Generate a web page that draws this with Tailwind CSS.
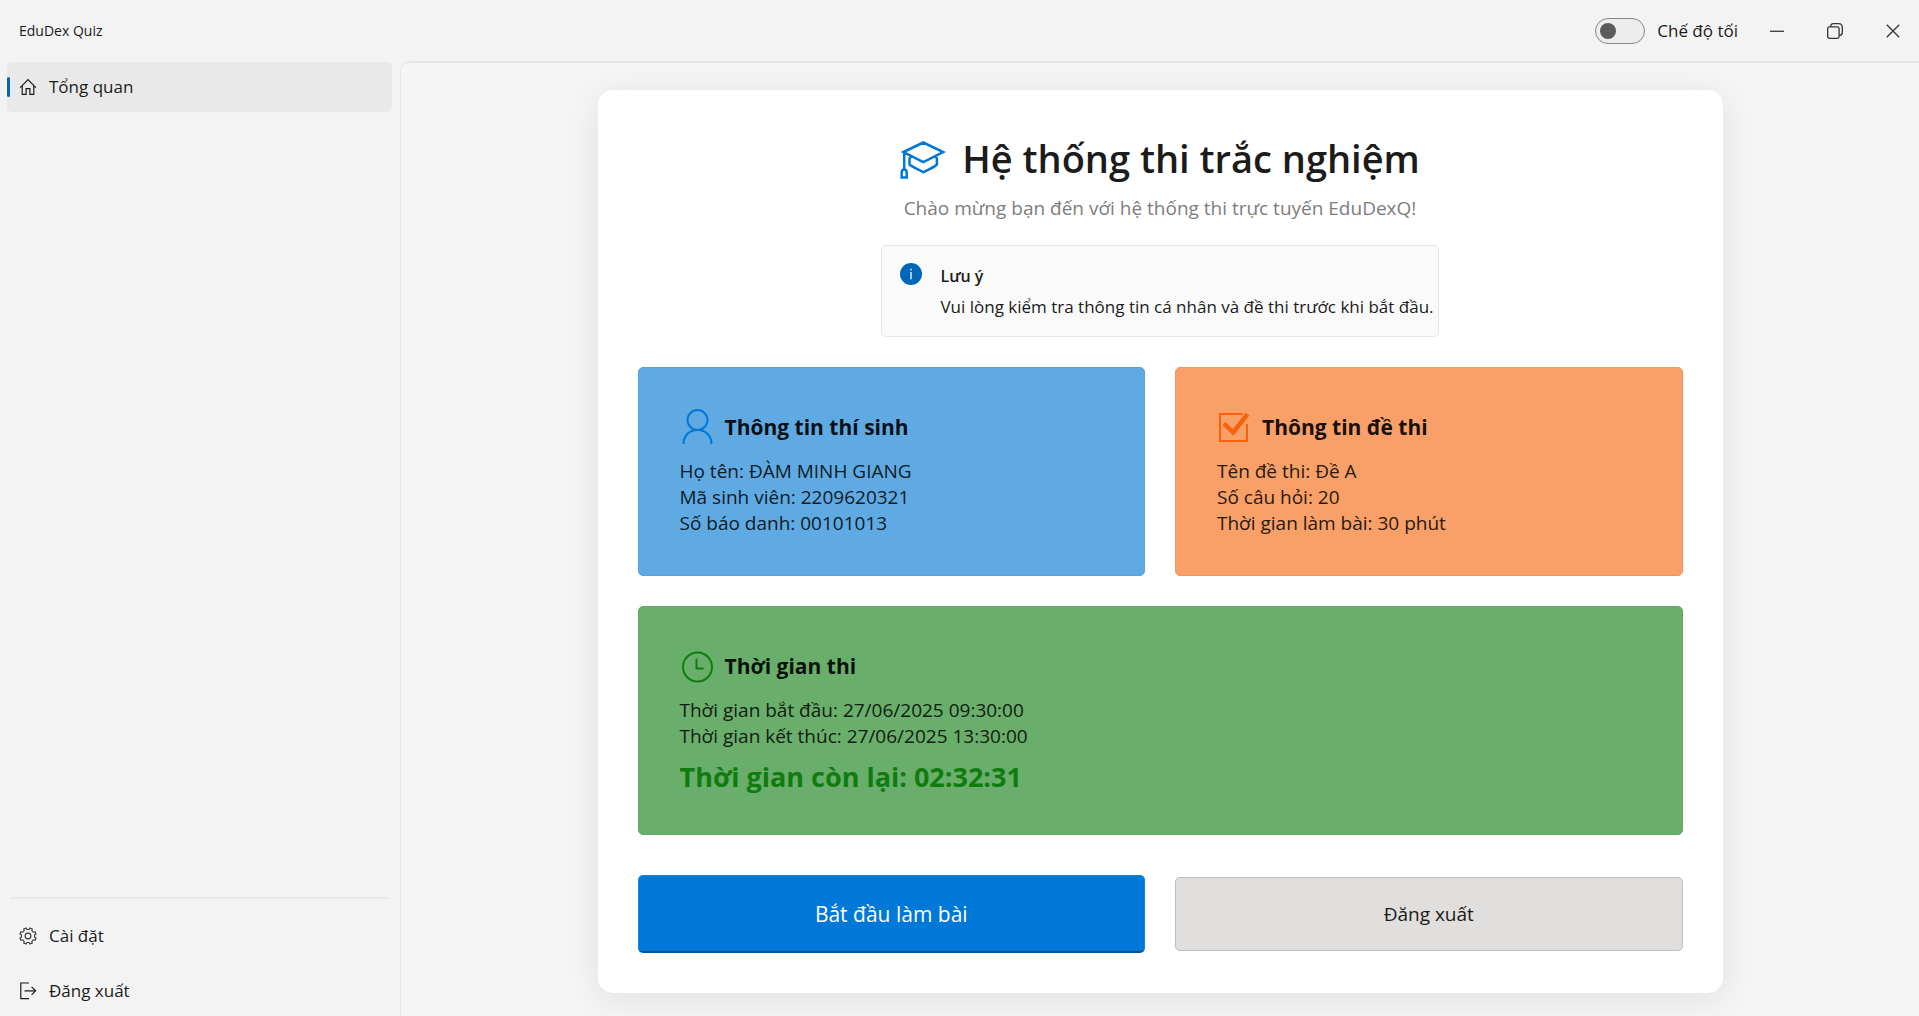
<!DOCTYPE html>
<html lang="vi">
<head>
<meta charset="utf-8">
<meta name="viewport" content="width=device-width, initial-scale=1">
<title>EduDex Quiz</title>
<script src="https://cdn.jsdelivr.net/npm/@tailwindcss/browser@4"></script>
</head>
<body class="bg-[#f3f3f3] font-['Open_Sans','Noto_Sans',sans-serif] text-[17px] leading-[26px] text-[#1b1b1b]">
<div class="flex h-screen flex-col overflow-hidden">
  <header class="flex h-[61px] shrink-0 items-center justify-between pl-[19px]">
    <span class="text-sm">EduDex Quiz</span>
    <div class="flex items-center">
      <label class="flex items-center gap-3">
        <span class="relative flex h-[26px] w-[50px]">
          <input type="checkbox" role="switch" class="peer h-full w-full appearance-none rounded-full border border-[#868686] bg-[#ededed]">
          <span class="pointer-events-none absolute top-[5px] left-[5px] h-4 w-4 rounded-full bg-[#5c5c5c] peer-checked:left-[29px]"></span>
        </span>
        <span>Chế độ tối</span>
      </label>
      <div class="-mr-[3px] ml-[10px] flex">
        <button aria-label="Thu nhỏ" class="flex h-[60px] w-[58px] items-center justify-center">
          <svg class="h-4 w-4" viewBox="0 0 16 16" fill="none" stroke="#444" stroke-width="1.4"><path d="M1 8.3h14"/></svg>
        </button>
        <button aria-label="Khôi phục" class="flex h-[60px] w-[58px] items-center justify-center">
          <svg class="h-4 w-4" viewBox="0 0 16 16" fill="none" stroke="#333" stroke-width="1.3"><rect x=".7" y="3.9" width="11.4" height="11.4" rx="1.8"/><path d="M3.6 3.4C3.8 1.6 4.8.7 6.5.7h5.3c2.2 0 3.5 1.3 3.5 3.5v5.3c0 1.7-.9 2.7-2.7 2.9"/></svg>
        </button>
        <button aria-label="Đóng" class="flex h-[60px] w-[58px] items-center justify-center">
          <svg class="h-4 w-4" viewBox="0 0 16 16" fill="none" stroke="#333" stroke-width="1.3"><path d="m1.8 1.8 12.4 12.4M14.2 1.8 1.8 14.2"/></svg>
        </button>
      </div>
    </div>
  </header>

  <div class="flex min-h-0 flex-1">
    <nav class="flex w-[400px] shrink-0 flex-col justify-between pt-px pr-2 pl-[7px]">
      <a href="#" aria-current="page" class="flex h-[50px] items-center rounded-[5px] bg-[#e9e9e9]">
        <span class="h-5 w-[3px] rounded-full bg-[#0067b8]"></span>
        <svg class="ml-[9px] h-[18px] w-[18px]" viewBox="0 0 18 18" fill="none" stroke="#1b1b1b" stroke-width="1.2"><path d="M1.2 9.6 9 1.7l7.8 7.9M3.2 7.8v8.6h3.9v-5.8h3.8v5.8h3.9V7.8"/></svg>
        <span class="ml-3">Tổng quan</span>
      </a>
      <div>
        <hr class="mx-[3px] mb-3 border-t-2 border-[#e9e9e9]">
        <a href="#" class="mb-[5px] flex h-[50px] items-center pl-3">
          <svg class="h-[18px] w-[18px]" viewBox="0 0 18 18" fill="none" stroke="#333" stroke-width="1.1" stroke-linejoin="round"><circle cx="9" cy="9" r="2.900"/><path d="M10.100 2.500 10.900.9l2.400 1-.5 1.700 1.600 1.600 1.700-.5 1 2.400-1.600.8v2.200l1.600.8-1 2.400-1.700-.5-1.600 1.600.5 1.700-2.400 1-.8-1.600H7.900l-.8 1.600-2.400-1 .5-1.700-1.600-1.600-1.700.5-1-2.400 1.600-.8V7.900L.9 7.100l1-2.400 1.700.5 1.600-1.600-.5-1.700 2.400-1 .8 1.600z"/></svg>
          <span class="ml-3">Cài đặt</span>
        </a>
        <a href="#" class="flex h-[50px] items-center pl-3">
          <svg class="h-[18px] w-[18px]" viewBox="0 0 18 18" fill="none" stroke="#1b1b1b" stroke-width="1.200"><path d="M10 1H1.800v15.600H10M5.500 8.800h11M12.600 4.800l4 4-4 4"/></svg>
          <span class="ml-3">Đăng xuất</span>
        </a>
      </div>
    </nav>

    <main class="flex-1 overflow-hidden rounded-tl-[10px] border-t-2 border-l border-[#e8e8e8] bg-[#f5f5f5] px-6 pt-[27px]">
      <section class="mx-auto max-w-[1125px] rounded-[15px] bg-white p-10 shadow-[0_6px_36px_rgba(0,0,0,0.09)]">
        <div class="flex flex-col items-center">
          <div class="flex items-center gap-4">
            <svg class="h-[46px] w-[46px]" viewBox="0 0 46 46" fill="none" stroke="#0078d7" stroke-width="2.500"><path d="M3.500 17 23.300 7.500 43.200 17 23.300 27zM4.200 17v17.500M10.700 21.500l-1.200 2.200v5.800c3.500 3 8.500 4.500 13.900 7.800 5.400-3.300 10.400-4.800 13.500-7.800v-5.800l-1.200-2.200M1.700 42.500v-5c0-1.900.7-3 2.500-3s2.500 1.100 2.500 3v5z"/></svg>
            <h1 class="text-[38px] leading-[56px] font-semibold">Hệ thống thi trắc nghiệm</h1>
          </div>
          <p class="mt-[9px] text-[19px] text-[#7d7d7d]">Chào mừng bạn đến với hệ thống thi trực tuyến EduDexQ!</p>
          <div role="note" class="mt-6 flex rounded-[5px] border border-[#e6e6e6] bg-[#fafafa] pt-[17px] pr-1 pb-4 pl-[18px]">
            <svg class="h-[22px] w-[22px]" viewBox="0 0 22 22"><circle cx="11" cy="11" r="11" fill="#0067b8"/><path d="M11 9v7.200M11 5.800v1.600" stroke="#fff" stroke-width="1.300"/></svg>
            <div class="ml-[18px]">
              <h2 class="text-base leading-[26px] font-semibold">Lưu ý</h2>
              <p class="mt-[5px]">Vui lòng kiểm tra thông tin cá nhân và đề thi trước khi bắt đầu.</p>
            </div>
          </div>
        </div>

        <div class="mt-[30px] grid grid-cols-2 gap-[30px]">
          <article class="rounded-[5px] border border-[#5ba1dc] bg-[#60aae4] px-[41px] pt-[41px] pb-[39px] text-[19px] text-[#0f1b24]">
            <h2 class="mb-[14px] flex h-[35px] items-center gap-[10px] text-[21px] font-bold text-[#0a1116]">
              <svg class="h-[35px] w-[35px]" viewBox="0 0 35 35" fill="none" stroke="#0078d7" stroke-width="2"><circle cx="17.500" cy="11" r="10"/><path d="M3.500 35C3.500 27 9 21 17.500 21S31.500 27 31.500 35"/></svg>
              Thông tin thí sinh
            </h2>
            <p>Họ tên: ĐÀM MINH GIANG</p>
            <p>Mã sinh viên: 2209620321</p>
            <p>Số báo danh: 00101013</p>
          </article>
          <article class="rounded-[5px] border border-[#f0965f] bg-[#f99f68] px-[41px] pt-[41px] pb-[39px] text-[19px] text-[#281a10]">
            <h2 class="mb-[14px] flex h-[35px] items-center gap-[10px] text-[21px] font-bold text-[#191009]">
              <svg class="h-[35px] w-[35px]" viewBox="0 0 35 35" fill="none" stroke="#f7630c"><path stroke-width="2" d="M25.500 5H3v27h27V15"/><path stroke-width="4.500" d="m7 14.500 9.200 9L30.500 5.200"/></svg>
              Thông tin đề thi
            </h2>
            <p>Tên đề thi: Đề A</p>
            <p>Số câu hỏi: 20</p>
            <p>Thời gian làm bài: 30 phút</p>
          </article>
          <article class="col-span-2 rounded-[5px] border border-[#65a565] bg-[#6aae6b] px-[41px] pt-[41px] pb-[39px] text-[19px] text-[#111c11]">
            <h2 class="mb-[14px] flex h-[35px] items-center gap-[10px] text-[21px] font-bold text-[#0b120b]">
              <svg class="h-[35px] w-[35px]" viewBox="0 0 35 35" fill="none" stroke="#107c10" stroke-width="2"><circle cx="17.500" cy="19" r="14.500"/><path d="M16.500 10.500v10h7"/></svg>
              Thời gian thi
            </h2>
            <p>Thời gian bắt đầu: 27/06/2025 09:30:00</p>
            <p>Thời gian kết thúc: 27/06/2025 13:30:00</p>
            <p class="mt-[10px] text-[27px] leading-[36px] font-bold text-[#107c10]">Thời gian còn lại: 02:32:31</p>
          </article>
        </div>

        <div class="mt-10 grid grid-cols-2 items-center gap-[30px]">
          <button class="h-[78px] rounded-[5px] border border-b-2 border-[#1683da] border-b-[#00549a] bg-[#0078d7] text-[21px] text-white">Bắt đầu làm bài</button>
          <button class="h-[74px] rounded-[5px] border border-[#bebdbb] bg-[#e1dfdd] text-[19px]">Đăng xuất</button>
        </div>
      </section>
    </main>
  </div>
</div>
</body>
</html>
